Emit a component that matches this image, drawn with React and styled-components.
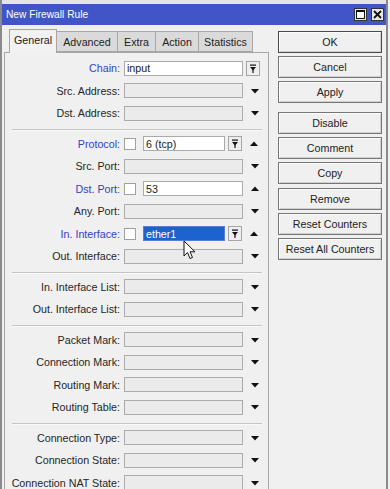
import React from 'react';
import styled, { createGlobalStyle } from 'styled-components';

const Global = createGlobalStyle`
  html, body { margin: 0; padding: 0; background: #f0f0f0; }
  body { font-family: "Liberation Sans", Arial, sans-serif; font-size: 10.7px; color: #222; }
  * { box-sizing: border-box; }
`;

const Window = styled.div`
  position: relative;
  width: 388px;
  height: 489px;
  overflow: hidden;
  background: #f0f0f0;
  border-left: 2px solid #8a8a8a;
  border-right: 2px solid #8a8a8a;
  padding-top: 4px;
  box-shadow: inset 0 4px 0 #e4e4e4;
`;

const TitleBar = styled.div`
  height: 21px;
  background: #4155c8;
  display: flex;
  align-items: center;
  padding: 0 2px 0 4px;
`;

const TitleText = styled.span`
  flex: 1;
  color: #fff;
  font-size: 10.2px;
`;

const TitleBtn = styled.div`
  width: 13px;
  height: 13px;
  margin-left: 4px;
  background: #e8e8e8;
  border: 1px solid #333;
  display: flex;
  align-items: center;
  justify-content: center;
`;

const Body = styled.div`
  display: flex;
  align-items: flex-start;
  padding-top: 3px;
`;

const TabArea = styled.div`
  margin-left: 2px;
  width: 265px;
  display: flex;
  flex-direction: column;
`;

const TabStrip = styled.div`
  display: flex;
  align-items: flex-end;
  height: 24px;
  padding-left: 5px;
  position: relative;
  z-index: 1;
`;

const Tab = styled.div`
  width: ${p => p.$w}px;
  height: ${p => (p.$active ? 24 : 21)}px;
  margin-bottom: ${p => (p.$active ? -1 : 0)}px;
  display: flex;
  align-items: center;
  justify-content: center;
  background: ${p => (p.$active ? '#f2f2f2' : '#dadada')};
  border: 1px solid #a6a6a6;
  border-bottom: ${p => (p.$active ? 'none' : '1px solid #a6a6a6')};
  border-left: ${p => (p.$first ? '1px solid #a6a6a6' : 'none')};
  color: #222;
  font-size: 10.7px;
  padding-bottom: ${p => (p.$active ? 3 : 0)}px;
`;

const Panel = styled.div`
  border: 1px solid #a6a6a6;
  border-bottom: none;
  height: 470px;
  padding-top: 4px;
  background: #f0f0f0;
`;

const Row = styled.div`
  display: flex;
  align-items: center;
  height: 22.5px;
`;

const Label = styled.div`
  width: 115px;
  text-align: right;
  white-space: nowrap;
  color: ${p => (p.$changed ? '#3341c8' : '#262626')};
  margin-right: 4px;
`;

const Field = styled.div`
  width: ${p => p.$w}px;
  height: 15px;
  margin-left: ${p => p.$ml || 0}px;
  border: 1px solid ${p => (p.$selected ? '#5a7fd0' : '#ababab')};
  background: ${p => (p.$selected ? '#1c63cf' : p.$filled ? '#ffffff' : '#ebebeb')};
  color: ${p => (p.$selected ? '#fff' : '#222')};
  padding-left: 2px;
  display: flex;
  align-items: center;
  white-space: nowrap;
  overflow: hidden;
`;

const Check = styled.div`
  width: 12px;
  height: 12px;
  border: 1px solid #a0a0a0;
  background: #fff;
`;

const DropBtn = styled.div`
  width: 14px;
  height: 15px;
  margin-left: ${p => p.$ml}px;
  border: 1px solid #a6a6a6;
  background: #eeeeee;
  display: flex;
  align-items: center;
  justify-content: center;
`;

const Arrow = styled.div`
  width: 8px;
  height: 6px;
  margin-left: ${p => p.$ml}px;
  display: flex;
`;

const Separator = styled.div`
  height: 8px;
  margin: 0 6px 0 7px;
  position: relative;
  &::after {
    content: '';
    position: absolute;
    left: 0;
    right: 0;
    top: 4px;
    height: 1px;
    background: #c4c4c4;
    box-shadow: 0 1px 0 #fafafa;
  }
`;

const ButtonCol = styled.div`
  margin-left: 9px;
  width: 104px;
  padding-top: 3px;
  display: flex;
  flex-direction: column;
  gap: 3.2px;
`;

const Button = styled.div`
  height: 22px;
  margin-top: ${p => (p.$gapBefore ? 5.5 : 0)}px;
  border: 1px solid ${p => (p.$default ? '#4a4a4a' : '#767676')};
  background: #f0f0f0;
  box-shadow: inset 1px 1px 0 #fcfcfc, inset -1px -1px 0 #d0d0d0;
  display: flex;
  align-items: center;
  justify-content: center;
  color: #222;
  white-space: nowrap;
`;

const Cursor = styled.svg`
  position: absolute;
  left: 181px;
  top: 240px;
`;

const DownTri = () => (
  <svg width="8" height="6" viewBox="0 0 8 6"><path d="M0 1 H8 L4 5.5 Z" fill="#111" /></svg>
);
const UpTri = () => (
  <svg width="8" height="6" viewBox="0 0 8 6"><path d="M0 5 H8 L4 0.5 Z" fill="#111" /></svg>
);
const ComboIcon = () => (
  <svg width="8" height="9" viewBox="0 0 8 9">
    <rect x="1" y="0.5" width="6" height="1.2" fill="#111" />
    <path d="M1 3 H7 L4 6.5 Z" fill="#111" />
    <rect x="3.4" y="5" width="1.2" height="4" fill="#111" />
  </svg>
);

const tabs = [
  { t: 'General', w: 48, active: true },
  { t: 'Advanced', w: 61 },
  { t: 'Extra', w: 38 },
  { t: 'Action', w: 43 },
  { t: 'Statistics', w: 54 },
];

// kinds: combo, drop, checkCombo, checkInput
const groups = [
  [
    { l: 'Chain', kind: 'combo', v: 'input', changed: true },
    { l: 'Src. Address', kind: 'drop' },
    { l: 'Dst. Address', kind: 'drop' },
  ],
  [
    { l: 'Protocol', kind: 'checkCombo', v: '6 (tcp)', changed: true },
    { l: 'Src. Port', kind: 'drop' },
    { l: 'Dst. Port', kind: 'checkInput', v: '53', changed: true },
    { l: 'Any. Port', kind: 'drop' },
    { l: 'In. Interface', kind: 'checkCombo', v: 'ether1', changed: true, selected: true },
    { l: 'Out. Interface', kind: 'drop' },
  ],
  [
    { l: 'In. Interface List', kind: 'drop' },
    { l: 'Out. Interface List', kind: 'drop' },
  ],
  [
    { l: 'Packet Mark', kind: 'drop' },
    { l: 'Connection Mark', kind: 'drop' },
    { l: 'Routing Mark', kind: 'drop' },
    { l: 'Routing Table', kind: 'drop' },
  ],
  [
    { l: 'Connection Type', kind: 'drop' },
    { l: 'Connection State', kind: 'drop' },
    { l: 'Connection NAT State', kind: 'drop' },
  ],
];

const buttons = [
  { t: 'OK', def: true },
  { t: 'Cancel' },
  { t: 'Apply' },
  { t: 'Disable', gap: true },
  { t: 'Comment' },
  { t: 'Copy' },
  { t: 'Remove' },
  { t: 'Reset Counters' },
  { t: 'Reset All Counters' },
];

function FormRow({ r }) {
  return (
    <Row>
      <Label $changed={r.changed}>{r.l}:</Label>
      {r.kind === 'combo' && (
        <>
          <Field $w={119} $filled>{r.v}</Field>
          <DropBtn $ml={2.5}><ComboIcon /></DropBtn>
        </>
      )}
      {r.kind === 'drop' && (
        <>
          <Field $w={119} />
          <Arrow $ml={7.5}><DownTri /></Arrow>
        </>
      )}
      {r.kind === 'checkCombo' && (
        <>
          <Check />
          <Field $w={82} $ml={7} $filled $selected={r.selected}>{r.v}</Field>
          <DropBtn $ml={3}><ComboIcon /></DropBtn>
          <Arrow $ml={8}><UpTri /></Arrow>
        </>
      )}
      {r.kind === 'checkInput' && (
        <>
          <Check />
          <Field $w={100} $ml={7} $filled>{r.v}</Field>
          <Arrow $ml={7.5}><UpTri /></Arrow>
        </>
      )}
    </Row>
  );
}

export default function App() {
  return (
    <>
      <Global />
      <Window>
        <TitleBar>
          <TitleText>New Firewall Rule</TitleText>
          <TitleBtn>
            <svg width="9" height="9" viewBox="0 0 9 9">
              <rect x="0.5" y="0.5" width="8" height="8" fill="#fff" stroke="#111" />
              <rect x="0.5" y="0.5" width="8" height="1.5" fill="#111" />
            </svg>
          </TitleBtn>
          <TitleBtn>
            <svg width="9" height="9" viewBox="0 0 9 9">
              <path d="M1 1 L8 8 M8 1 L1 8" stroke="#111" strokeWidth="1.8" />
            </svg>
          </TitleBtn>
        </TitleBar>
        <Body>
          <TabArea>
            <TabStrip>
              {tabs.map((t, i) => (
                <Tab key={t.t} $w={t.w} $active={t.active} $first={i === 0}>{t.t}</Tab>
              ))}
            </TabStrip>
            <Panel>
              {groups.map((g, gi) => (
                <React.Fragment key={gi}>
                  {gi > 0 && <Separator />}
                  {g.map(r => <FormRow key={r.l} r={r} />)}
                </React.Fragment>
              ))}
            </Panel>
          </TabArea>
          <ButtonCol>
            {buttons.map(b => (
              <Button key={b.t} $default={b.def} $gapBefore={b.gap}>{b.t}</Button>
            ))}
          </ButtonCol>
        </Body>
        <Cursor width="14" height="21" viewBox="0 0 14 21">
          <path d="M1 1 L1 16 L4.5 12.5 L7 18.5 L9.5 17.5 L7 11.8 L12 11.8 Z" fill="#fff" stroke="#111" strokeWidth="1" strokeLinejoin="round" />
        </Cursor>
      </Window>
    </>
  );
}
